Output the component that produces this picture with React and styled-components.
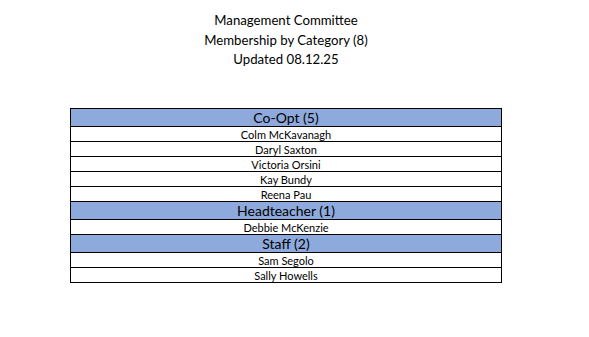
import React from "react";
import styled, { createGlobalStyle } from "styled-components";

const GlobalStyle = createGlobalStyle`
  html, body {
    margin: 0;
    padding: 0;
    background: #ffffff;
  }
  body {
    font-family: "Lato", "Liberation Sans", sans-serif;
    color: #000000;
  }
`;

const groups = [
  {
    title: "Co-Opt (5)",
    members: ["Colm McKavanagh", "Daryl Saxton", "Victoria Orsini", "Kay Bundy", "Reena Pau"],
  },
  { title: "Headteacher (1)", members: ["Debbie McKenzie"] },
  { title: "Staff (2)", members: ["Sam Segolo", "Sally Howells"] },
];

function App() {
  return (
    <>
      <GlobalStyle />
      <Page>
        <Heading>
          <div>Management Committee</div>
          <div>Membership by Category (8)</div>
          <div>Updated 08.12.25</div>
        </Heading>
        <Table>
          {groups.map((g) => (
            <React.Fragment key={g.title}>
              <CategoryRow>{g.title}</CategoryRow>
              {g.members.map((m) => (
                <MemberRow key={m}>{m}</MemberRow>
              ))}
            </React.Fragment>
          ))}
        </Table>
      </Page>
    </>
  );
}

export default App;

const Page = styled.div`
  width: 589px;
  height: 337px;
  display: flex;
  flex-direction: column;
  align-items: flex-start;
  padding-top: 11px;
  box-sizing: border-box;
`;

const Heading = styled.div`
  align-self: stretch;
  display: flex;
  flex-direction: column;
  align-items: center;
  padding-right: 17px;
  font-size: 13.2px;
  line-height: 19.5px;
`;

const Table = styled.div`
  margin-top: 38px;
  margin-left: 70px;
  width: 432px;
  box-sizing: border-box;
  border: 1px solid #000;
  display: flex;
  flex-direction: column;
`;

const CategoryRow = styled.div`
  height: 17px;
  background: #8ea9db;
  font-size: 14px;
  line-height: 17px;
  text-align: center;
  border-bottom: 1px solid #000;
  &:last-child { border-bottom: none; }
`;

const MemberRow = styled.div`
  height: 14px;
  font-size: 11px;
  line-height: 15px;
  text-align: center;
  border-bottom: 1px solid #000;
  &:last-child { border-bottom: none; }
`;
